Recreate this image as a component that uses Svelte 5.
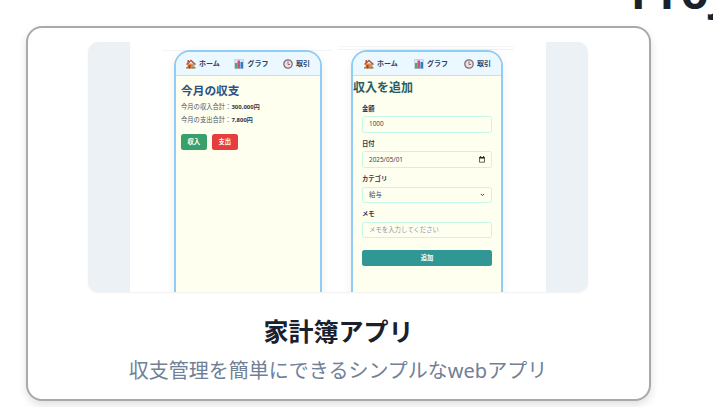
<script>
  const nav = [
    { icon: 'home', label: 'ホーム' },
    { icon: 'chart', label: 'グラフ' },
    { icon: 'clock', label: '取引' }
  ];
  const fields = [
    { label: '金額', value: '1000' },
    { label: '日付', value: '2025/05/01', end: 'date' },
    { label: 'カテゴリ', value: '給与', end: 'select' },
    { label: 'メモ', value: 'メモを入力してください', hint: true }
  ];
</script>

{#snippet icon(name)}
  <svg class="icon" viewBox="0 0 20 20">
    {#if name === 'home'}
      <path d="M3 9h14v10H3z" fill="#f0803c" />
      <path d="M3 2h3v6H3z" fill="#b5513a" />
      <path d="M0 10 10 1l10 9-2 2-8-7-8 7z" fill="#b9563e" />
      <path d="M5 12h4v7H5z" fill="#8b4a35" />
      <path d="M12 11h4v4h-4z" fill="#6fb7d8" />
      <path d="M0 16h4v3H0zM11 16h8v3h-8z" fill="#6e9b45" />
    {:else if name === 'chart'}
      <path d="M1 1h18v18H1z" fill="#dce9ef" stroke="#a9bdca" />
      <path d="M2 8h5v11H2z" fill="#48a878" />
      <path d="M7 3h5v16H7z" fill="#dc4a78" />
      <path d="M13 6h5v13h-5z" fill="#3478cf" />
    {:else}
      <circle cx="10" cy="10" r="8.4" fill="#efdfe1" stroke="#77717b" stroke-width="2.6" />
      <path d="M10 4.5V11h4" fill="none" stroke="#82545e" stroke-width="1.6" />
    {/if}
  </svg>
{/snippet}

{#snippet navbar()}
  <nav>
    {#each nav as item}
      <span class="item">{@render icon(item.icon)}<b>{item.label}</b></span>
    {/each}
  </nav>
{/snippet}

<main>
  <h1>Proj</h1>
  <article>
    <div class="preview">
      <div class="canvas">
        <div class="shot first">
          <div class="phone">
            {@render navbar()}
            <section class="summary">
              <h2>今月の収支</h2>
              <p>今月の収入合計：<b>300,000円</b></p>
              <p>今月の支出合計：<b>7,800円</b></p>
              <div class="actions">
                <span class="btn green">収入</span>
                <span class="btn red">支出</span>
              </div>
            </section>
          </div>
        </div>
        <div class="shot second">
          <div class="phone">
            {@render navbar()}
            <section class="form">
              <h2>収入を追加</h2>
              {#each fields as f}
                <div class="field">
                  <span class="label">{f.label}</span>
                  <div class="input" class:hint={f.hint}>
                    <span>{f.value}</span>
                    {#if f.end === 'date'}
                      <svg width="6" height="7" viewBox="0 0 7 8"><path d="M.6 1.6h5.8v5.6H.6z" fill="none" stroke="#222" stroke-width=".8" /><path d="M.4 1h6.2v1.8H.4zM1.2 0h1v1h-1zM4.8 0h1v1h-1z" fill="#222" /></svg>
                    {:else if f.end === 'select'}
                      <svg width="5" height="4" viewBox="0 0 5 4"><path d="m.8.9 1.7 1.7L4.2.9" fill="none" stroke="#444" stroke-width="1" /></svg>
                    {/if}
                  </div>
                </div>
              {/each}
              <span class="submit">追加</span>
            </section>
          </div>
        </div>
      </div>
    </div>
    <h3>家計簿アプリ</h3>
    <p class="desc">収支管理を簡単にできるシンプルなwebアプリ</p>
  </article>
</main>

<style>
  :global(body) { background: #fff; }
  main {
    width: 713px;
    height: 407px;
    overflow: hidden;
    font-family: "Noto Sans", "Noto Sans CJK JP", sans-serif;
    color: #1a202c;
  }
  h1, h2, h3, p { margin: 0; }
  h1 {
    height: 26px;
    padding-left: 631px;
    font-size: 45px;
    line-height: 57px;
    letter-spacing: 1.3px;
    margin-top: -37px;
    margin-bottom: 37px;
    white-space: nowrap;
  }
  article {
    box-sizing: border-box;
    width: 625px;
    height: 375px;
    margin-left: 26px;
    padding-top: 14px;
    border: 2px solid #a9a9a9;
    border-radius: 16px;
    background: #fff;
    box-shadow: 0 4px 8px rgba(0, 0, 0, .12);
    display: flex;
    flex-direction: column;
    align-items: center;
  }
  .preview {
    width: 500px;
    height: 250px;
    flex: none;
    margin-right: 1px;
    border-radius: 10px;
    background: #ebf1f5;
    box-shadow: 0 1px 2px rgba(0, 0, 0, .06);
    overflow: hidden;
    display: flex;
    justify-content: center;
  }
  .canvas {
    width: 416px;
    height: 250px;
    background: #fff;
    box-sizing: border-box;
    padding-left: 32px;
    display: flex;
    gap: 6px;
    overflow: hidden;
  }
  .shot { box-sizing: border-box; height: 250px; overflow: hidden; }
  .first { width: 170px; padding: 8px 10px 0 12px; background: linear-gradient(#f2f4f5, #f2f4f5) 0 8px / 100% 1px no-repeat; }
  .second {
    width: 176px;
    padding: 7.5px 11px 0 13px;
    background: linear-gradient(#f3f5f6, #f3f5f6) 0 4px / 100% 1px no-repeat, linear-gradient(#f0f3f5, #f0f3f5) 0 7px / 100% 1px no-repeat;
  }
  .phone {
    box-sizing: border-box;
    height: 270px;
    border: 2px solid #90cdf4;
    border-radius: 16px;
    background: #fffff0;
    overflow: hidden;
    box-shadow: 0 2px 10px rgba(0, 0, 0, .07);
  }
  nav {
    box-sizing: border-box;
    height: 24px;
    padding: 1px 10px 0 10px;
    display: flex;
    justify-content: space-between;
    align-items: center;
    background: #ebf8ff;
    border-bottom: 1px solid #bee3f8;
    color: #2a4365;
    font-size: 8px;
    line-height: 10px;
  }
  .second nav { padding-left: 11px; }
  .item { display: flex; align-items: center; gap: 3px; white-space: nowrap; }
  .item b { font-size: 7px; }
  .icon { width: 10px; height: 10px; display: block; }
  .summary { padding: 5px 0 0 5px; color: #4a5568; }
  .summary h2 { font-size: 11.7px; line-height: 18px; color: #2c5282; margin-bottom: 2px; }
  .summary p { font-size: 6.3px; line-height: 12.5px; white-space: nowrap; }
  .summary p b { color: #2d3748; font-size: 6px; }
  .actions { display: flex; gap: 5.5px; margin-top: 8px; }
  .btn { width: 25.5px; height: 16px; border-radius: 2.5px; color: #fff; font-weight: 700; font-size: 6.3px; line-height: 16px; text-align: center; }
  .green { background: #38a169; }
  .red { background: #e53e3e; }
  .form h2 { font-size: 12px; line-height: 18px; color: #285e61; padding-top: 3px; margin-bottom: 7px; }
  .field { width: 130px; height: 35.3px; margin-left: 9px; }
  .label { display: block; height: 12.5px; font-size: 6.3px; line-height: 9px; font-weight: 700; color: #2d3748; }
  .input {
    box-sizing: border-box;
    height: 16.5px;
    border: 1px solid #c6f6e5;
    border-radius: 2.5px;
    padding: 0 6px;
    display: flex;
    align-items: center;
    justify-content: space-between;
    font-size: 6.4px;
    line-height: 14px;
    color: #3b4556;
  }
  .hint { color: #8c95a3; }
  .submit {
    display: block;
    width: 130px;
    height: 16px;
    margin: 5.5px 0 0 9px;
    border-radius: 2.5px;
    background: #319795;
    color: #fff;
    text-align: center;
    font-size: 6.3px;
    font-weight: 700;
    line-height: 16px;
  }
  h3 { margin-top: 20px; font-size: 25px; line-height: 38px; font-weight: 700; }
  .desc { margin-top: 6px; margin-right: 1px; font-size: 20px; line-height: 30px; color: #718096; white-space: nowrap; }
</style>
